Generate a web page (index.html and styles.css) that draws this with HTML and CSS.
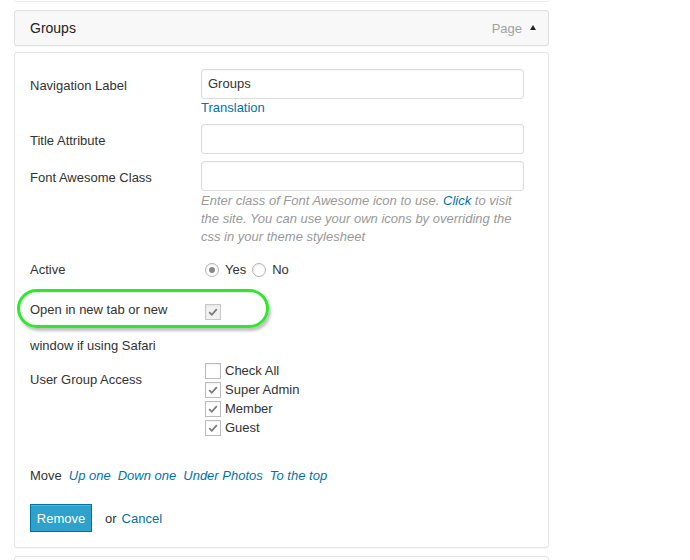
FILE: index.html
```html
<!DOCTYPE html>
<html>
<head>
<meta charset="utf-8">
<link rel="stylesheet" href="styles.css">
</head>
<body>
<div class="page">
  <div class="prev-box"></div>
  <div class="item-header">
    <span class="item-title">Groups</span>
    <span class="item-controls"><span class="item-type">Page</span><span class="arrow"></span></span>
  </div>
  <div class="item-body">
    <div class="row row-nav">
      <div class="label label-input">Navigation Label</div>
      <div class="field">
        <div class="input">Groups</div>
        <a class="link">Translation</a>
      </div>
    </div>
    <div class="row">
      <div class="label label-input">Title Attribute</div>
      <div class="field"><div class="input"></div></div>
    </div>
    <div class="row">
      <div class="label label-input">Font Awesome Class</div>
      <div class="field">
        <div class="input"></div>
        <p class="desc">Enter class of Font Awesome icon to use. <a class="link">Click</a> to visit the site. You can use your own icons by overriding the css in your theme stylesheet</p>
      </div>
    </div>
    <div class="row row-active">
      <div class="label">Active</div>
      <div class="field radios">
        <span class="radio checked"></span><span class="opt">Yes</span>
        <span class="radio"></span><span class="opt">No</span>
      </div>
    </div>
    <div class="row row-open">
      <div class="label label-open">Open in new tab or new window if using Safari</div>
      <div class="field field-open"><span class="cb cb-open checked"><svg viewBox="0 0 14 14"><path d="M3.2 7.2 L5.8 9.8 L10.8 4.2" fill="none" stroke="#7a7a7a" stroke-width="1.8"/></svg></span></div>
      <div class="highlight"></div>
    </div>
    <div class="row row-groups">
      <div class="label label-groups">User Group Access</div>
      <div class="field checklist">
        <div class="check-row"><span class="cb"></span>Check All</div>
        <div class="check-row"><span class="cb checked"><svg viewBox="0 0 14 14"><path d="M3.2 7.2 L5.8 9.8 L10.8 4.2" fill="none" stroke="#7a7a7a" stroke-width="1.8"/></svg></span>Super Admin</div>
        <div class="check-row"><span class="cb checked"><svg viewBox="0 0 14 14"><path d="M3.2 7.2 L5.8 9.8 L10.8 4.2" fill="none" stroke="#7a7a7a" stroke-width="1.8"/></svg></span>Member</div>
        <div class="check-row"><span class="cb checked"><svg viewBox="0 0 14 14"><path d="M3.2 7.2 L5.8 9.8 L10.8 4.2" fill="none" stroke="#7a7a7a" stroke-width="1.8"/></svg></span>Guest</div>
      </div>
    </div>
    <div class="move"><span>Move</span><a class="link it">Up one</a><a class="link it">Down one</a><a class="link it">Under Photos</a><a class="link it">To the top</a></div>
    <div class="actions">
      <button class="btn">Remove</button>
      <span class="or">or</span>
      <a class="link">Cancel</a>
    </div>
  </div>
  <div class="next-box"></div>
</div>
</body>
</html>
```

FILE: styles.css
```css
html, body {
  margin: 0;
  padding: 0;
  background: #fff;
}
body {
  font-family: "Liberation Sans", Arial, sans-serif;
  font-size: 13px;
  color: #333;
  height: 560px;
  overflow: hidden;
}
.page {
  width: 535px;
  margin-left: 14px;
}
.prev-box {
  height: 1px;
  border: 1px solid #ececec;
  border-top: none;
  border-radius: 0 0 3px 3px;
  background: #fff;
  margin-bottom: 8px;
}
.item-header {
  height: 34px;
  border: 1px solid #dfdfdf;
  border-radius: 3px;
  background: #f8f8f8;
  display: flex;
  align-items: center;
  justify-content: space-between;
  padding: 0 12px 0 15px;
  box-shadow: 0 1px 1px rgba(0,0,0,0.03);
}
.item-title {
  font-size: 14px;
  color: #222;
}
.item-controls {
  display: flex;
  align-items: center;
  color: #a0a0a0;
  font-size: 13px;
}
.arrow {
  width: 0;
  height: 0;
  border-left: 3.5px solid transparent;
  border-right: 3.5px solid transparent;
  border-bottom: 5px solid #222;
  margin-left: 8px;
  margin-top: -1px;
}
.item-body {
  margin-top: 6px;
  border: 1px solid #e5e5e5;
  border-radius: 3px;
  background: #fff;
  padding: 16px 24px 15px 15px;
  box-shadow: 0 1px 1px rgba(0,0,0,0.03);
}
.row {
  display: grid;
  grid-template-columns: 171px 323px;
  position: relative;
}
.label {
  line-height: 18px;
  color: #333;
}
.label-input {
  padding-top: 8px;
}
.field {
  line-height: 18px;
}
.input {
  height: 28px;
  border: 1px solid #dcdcdc;
  border-radius: 3px;
  box-shadow: inset 0 1px 2px rgba(0,0,0,0.04);
  line-height: 28px;
  padding: 0 6px;
  color: #333;
  font-size: 13px;
}
.row-nav {
  margin-bottom: 7px;
}
.row-nav + .row {
  margin-bottom: 7px;
}
.link {
  color: #0073aa;
  text-decoration: none;
  cursor: pointer;
}
.desc {
  margin: 1px 0 0;
  font-style: italic;
  color: #999;
  line-height: 18px;
}
.desc .link {
  color: #0073aa;
}
.row-active {
  margin-top: 15px;
}
.radios {
  display: flex;
  align-items: center;
  padding-left: 4px;
}
.radio {
  width: 12px;
  height: 12px;
  border: 1px solid #b4b4b4;
  border-radius: 50%;
  box-shadow: inset 0 1px 2px rgba(0,0,0,0.08);
  display: inline-flex;
  align-items: center;
  justify-content: center;
  margin-right: 6px;
}
.radio.checked::after {
  content: "";
  width: 6px;
  height: 6px;
  border-radius: 50%;
  background: #888;
}
.opt {
  margin-right: 6px;
}
.row-open {
  margin-top: 13px;
}
.label-open {
  line-height: 36px;
  padding-right: 4px;
}
.field-open {
  padding-left: 4px;
  padding-top: 11px;
}
.cb {
  width: 14px;
  height: 14px;
  border: 1px solid #bbb;
  background: #fff;
  display: inline-block;
  box-shadow: inset 0 1px 2px rgba(0,0,0,0.06);
  vertical-align: middle;
  margin-right: 4px;
  position: relative;
  top: -1px;
}
.cb svg {
  display: block;
  width: 14px;
  height: 14px;
}
.cb-open {
  background: #f1f1f1;
  border-color: #c8c8c8;
}
.highlight {
  position: absolute;
  left: -13px;
  top: -3px;
  width: 246px;
  height: 33px;
  border: 3px solid #2ee82a;
  border-radius: 20px;
  box-shadow: 2px 3px 3px rgba(0,0,0,0.25), inset 1px 1px 2px rgba(0,0,0,0.12);
  pointer-events: none;
}
.row-groups {
  margin-top: -3px;
}
.label-groups {
  padding-top: 10px;
}
.checklist {
  padding-left: 4px;
}
.check-row {
  line-height: 19px;
  height: 19px;
  white-space: nowrap;
}
.move {
  margin-top: 30px;
  line-height: 18px;
  color: #333;
  display: flex;
  gap: 7px;
}
.it {
  font-style: italic;
}
.actions {
  margin-top: 19px;
  display: flex;
  align-items: center;
}
.btn {
  font-family: "Liberation Sans", Arial, sans-serif;
  font-size: 13px;
  height: 28px;
  width: 62px;
  padding: 0;
  background: #2ea2cc;
  border: 1px solid #0074a2;
  color: #fff;
  border-radius: 0;
  box-shadow: inset 0 1px 0 rgba(120,200,230,0.5);
  cursor: pointer;
}
.or {
  margin-left: 13px;
  margin-right: 5px;
  color: #333;
}
.actions .link {
  font-size: 13px;
}
.next-box {
  margin-top: 8px;
  height: 20px;
  border: 1px solid #e5e5e5;
  border-radius: 3px;
}
```
